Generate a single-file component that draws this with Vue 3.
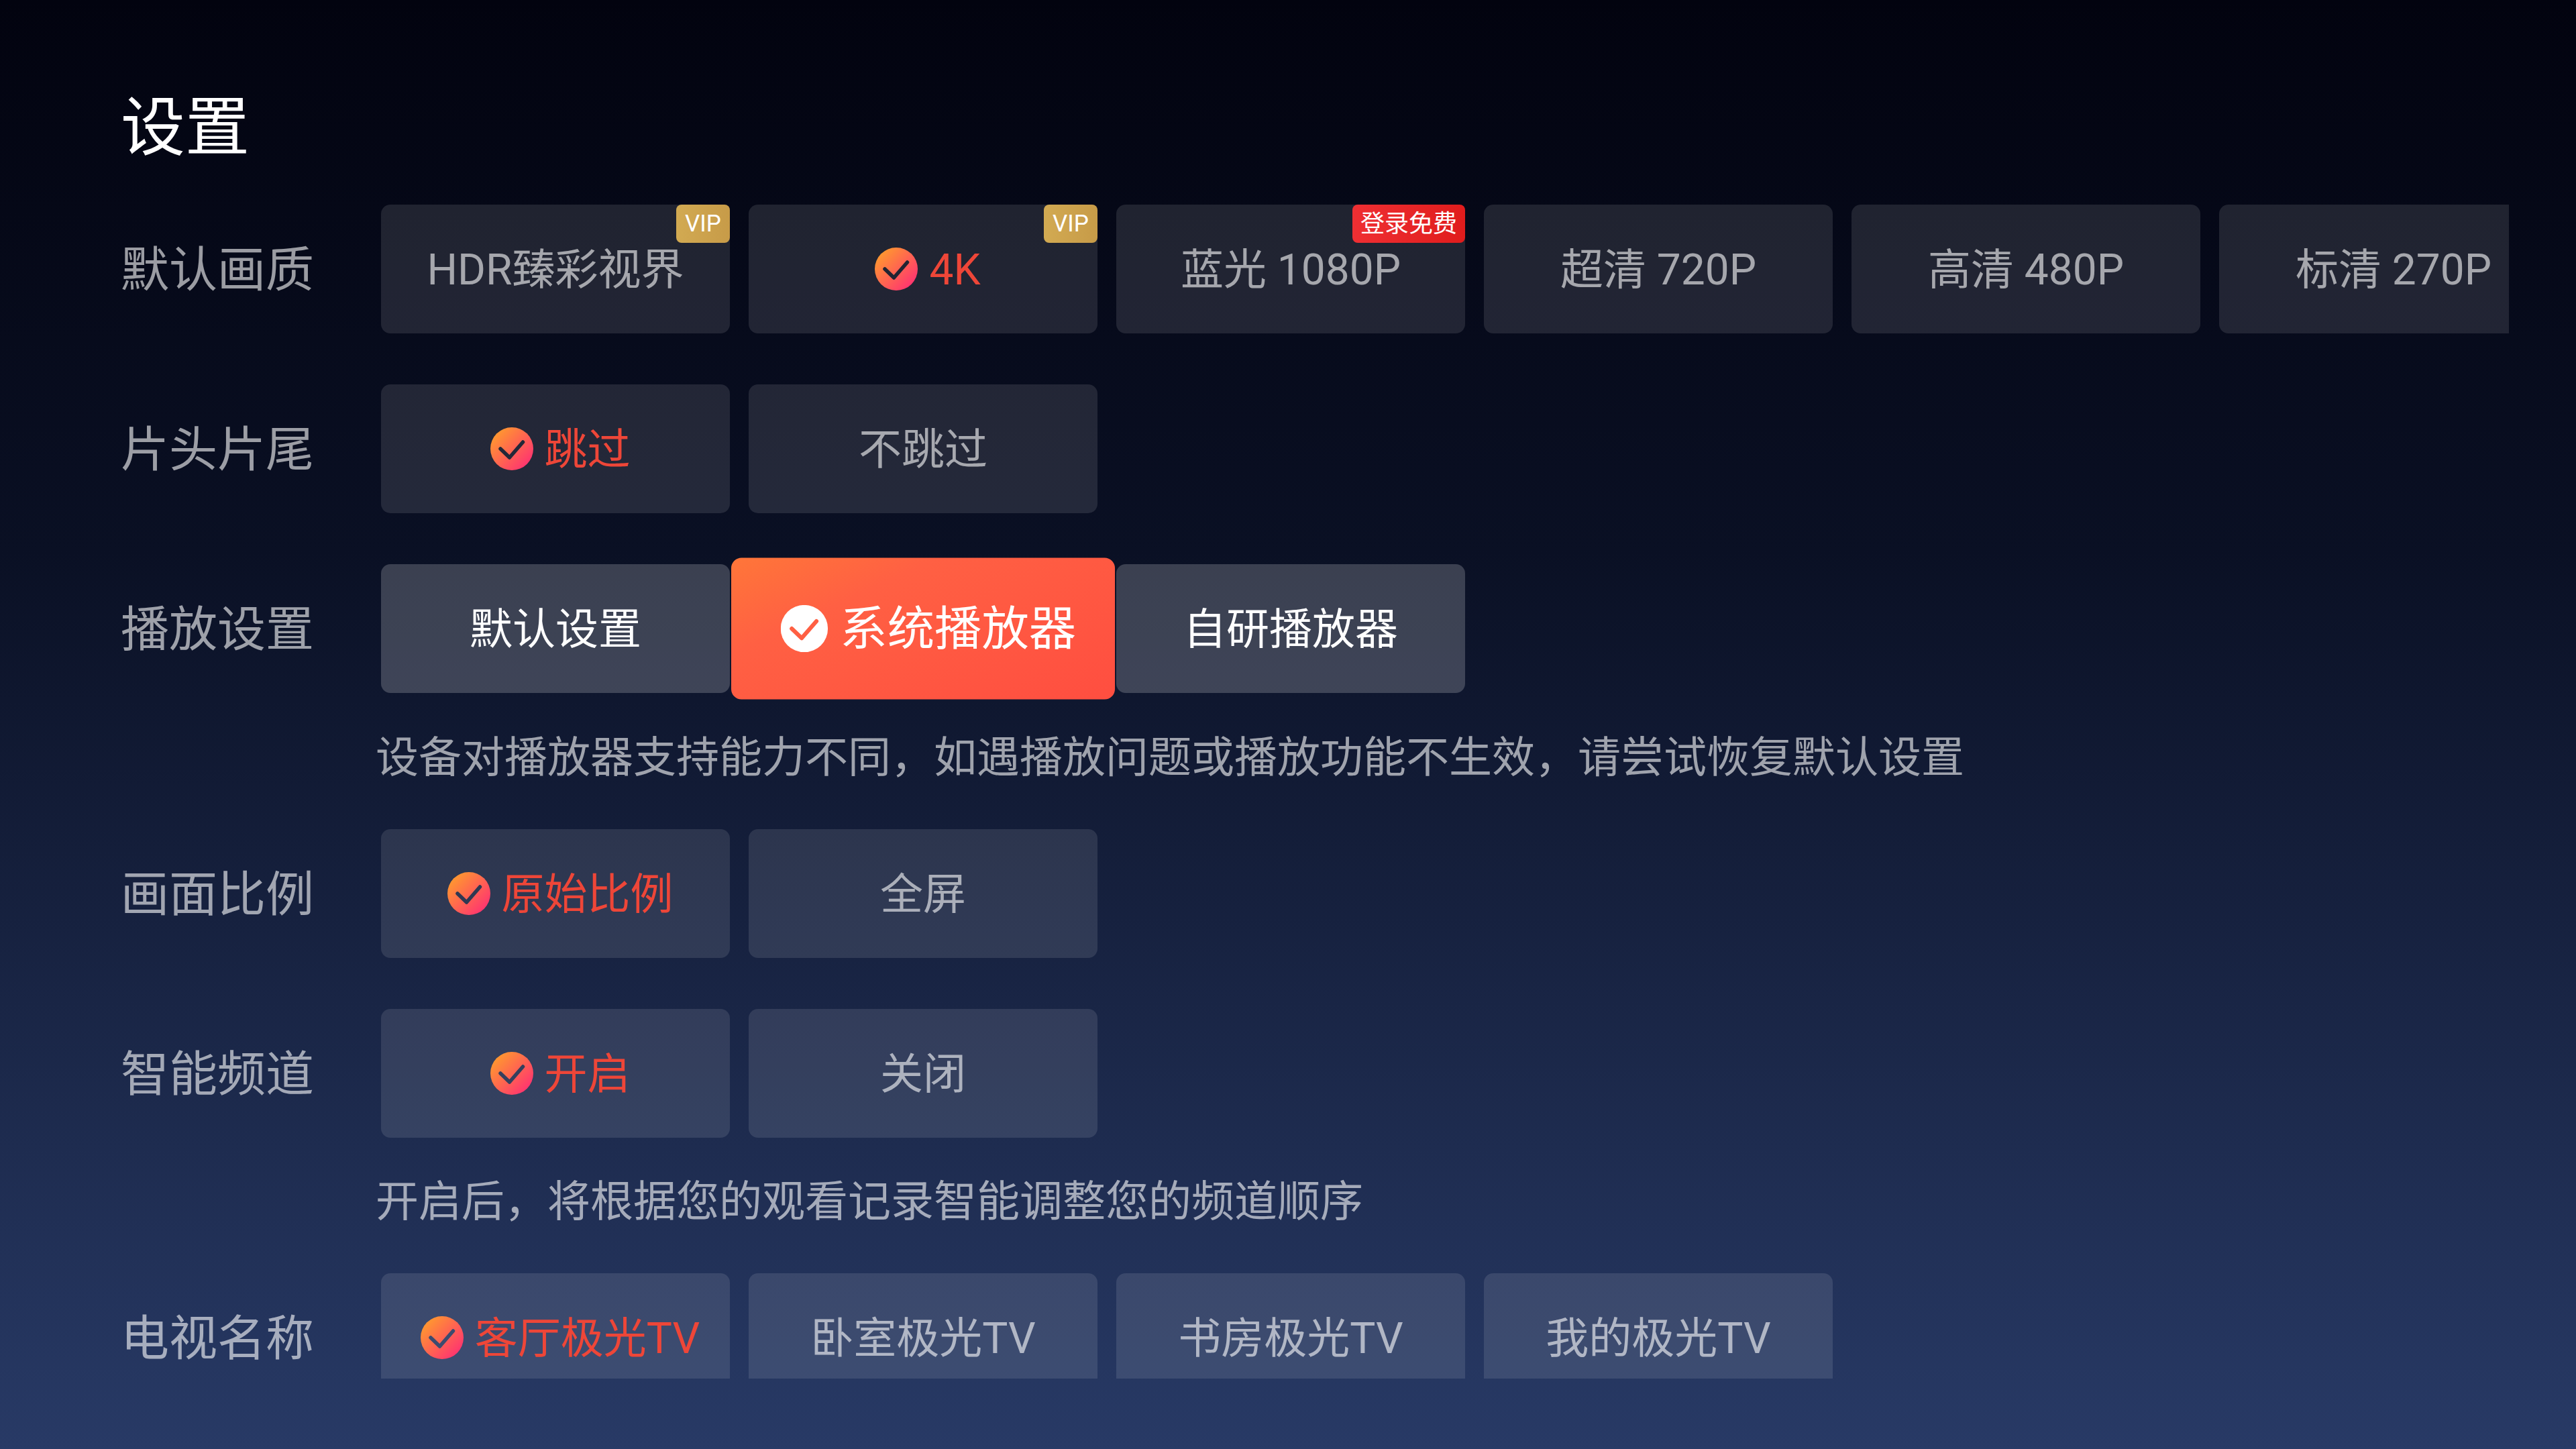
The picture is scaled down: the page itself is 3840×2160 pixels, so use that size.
<script setup>
const rows = [
  { label: '默认画质', options: [
    { text: 'HDR臻彩视界', badge: 'VIP' },
    { text: '4K', checked: true, badge: 'VIP' },
    { text: '蓝光 1080P', badge: '登录免费' },
    { text: '超清 720P' },
    { text: '高清 480P' },
    { text: '标清 270P' },
  ] },
  { label: '片头片尾', options: [{ text: '跳过', checked: true }, { text: '不跳过' }] },
  { label: '播放设置', active: true, options: [
    { text: '默认设置' },
    { text: '系统播放器', checked: true, focused: true },
    { text: '自研播放器' },
  ], hint: '设备对播放器支持能力不同，如遇播放问题或播放功能不生效，请尝试恢复默认设置' },
  { label: '画面比例', options: [{ text: '原始比例', checked: true }, { text: '全屏' }] },
  { label: '智能频道', tight: true, options: [{ text: '开启', checked: true }, { text: '关闭' }],
    hint: '开启后，将根据您的观看记录智能调整您的频道顺序' },
  { label: '电视名称', options: [
    { text: '客厅极光TV', checked: true },
    { text: '卧室极光TV' },
    { text: '书房极光TV' },
    { text: '我的极光TV' },
  ] },
]
</script>

<template>
  <main class="page">
    <h1 class="title">设置</h1>
    <div class="list">
      <section
        v-for="(row, r) in rows"
        :key="row.label"
        class="group"
        :class="{ 'with-hint': row.hint, tight: row.tight }"
      >
        <div class="row" :class="{ active: row.active }">
          <div class="label">{{ row.label }}</div>
          <div class="options">
            <div
              v-for="(opt, o) in row.options"
              :key="opt.text"
              class="option"
              :class="{ checked: opt.checked, focused: opt.focused }"
            >
              <svg v-if="opt.checked" class="check" viewBox="0 0 64 64">
                <defs>
                  <linearGradient :id="`g${r}-${o}`" x1="0.12" y1="0.1" x2="0.9" y2="0.85">
                    <stop offset="0" stop-color="#ff9a2e" />
                    <stop offset="1" stop-color="#ff3470" />
                  </linearGradient>
                  <mask :id="`m${r}-${o}`">
                    <rect width="64" height="64" fill="#fff" />
                    <path d="M15 32 L28.5 45 L48.5 22" fill="none" stroke="#000" stroke-width="5.5" stroke-linecap="round" stroke-linejoin="round" />
                  </mask>
                </defs>
                <circle
                  cx="32" cy="32" r="32"
                  :fill="opt.focused ? '#fff' : `url(#g${r}-${o})`"
                  :mask="`url(#m${r}-${o})`"
                />
              </svg>
              <span class="text">{{ opt.text }}</span>
              <span v-if="opt.badge" class="badge" :class="opt.badge === 'VIP' ? 'vip' : 'free'">{{ opt.badge }}</span>
            </div>
          </div>
        </div>
        <p v-if="row.hint" class="hint">{{ row.hint }}</p>
      </section>
    </div>
  </main>
</template>

<style>
html, body { margin: 0; background: #02030f; }
</style>

<style scoped>
.page {
  width: 3840px;
  height: 2160px;
  box-sizing: border-box;
  padding: 0 100px 105px 180px;
  display: flex;
  flex-direction: column;
  overflow: hidden;
  background: linear-gradient(180deg, #02030f 0%, #0a1024 38%, #283a66 100%);
  font-family: Roboto, "Noto Sans CJK SC", sans-serif;
  color: rgba(255, 255, 255, 0.6);
}
.title {
  flex: none;
  margin: 0;
  height: 305px;
  box-sizing: border-box;
  padding-top: 125px;
  font-size: 96px;
  line-height: 130px;
  font-weight: 400;
  color: #fff;
}
.list { flex: 1; min-height: 0; overflow: hidden; }
.group { margin-bottom: 76px; }
.group.with-hint { margin-bottom: 74px; }
.row { display: flex; align-items: center; height: 192px; }
.label { flex: none; width: 388px; padding-top: 4px; font-size: 72px; line-height: 188px; }
.options { display: flex; gap: 28px; }
.option {
  position: relative;
  flex: none;
  display: flex;
  align-items: center;
  justify-content: center;
  gap: 17px;
  box-sizing: border-box;
  width: 520px;
  height: 192px;
  border-radius: 14px;
  background: rgba(255, 255, 255, 0.11);
  font-size: 64px;
  line-height: 1;
  white-space: nowrap;
}
.text { padding-top: 3px; }
.option.checked { padding-left: 14px; color: #ee4638; }
.row.active .option { background: rgba(255, 255, 255, 0.2); color: #fff; }
.row.active .option.focused {
  z-index: 1;
  transform: scale(1.1);
  color: #fff;
  background: linear-gradient(155deg, #ff7639 0%, #ff6043 30%, #ff4e40 100%);
}
.check { flex: none; width: 64px; height: 64px; }
.badge {
  position: absolute;
  top: 0;
  right: 0;
  height: 57px;
  display: flex;
  align-items: center;
  justify-content: center;
  border-radius: 8px;
  line-height: 1;
  color: #fff;
}
.badge.vip { width: 80px; font-size: 35px; background: linear-gradient(90deg, #d2aa52, #c79b48); }
.badge.free { width: 168px; font-size: 36px; background: linear-gradient(90deg, #ef2f33, #e01c1c); }
.hint {
  margin: 65px 0 0;
  padding-left: 380px;
  font-size: 64px;
  line-height: 64px;
  white-space: nowrap;
}
.group.tight .hint { margin-top: 64px; }
</style>
